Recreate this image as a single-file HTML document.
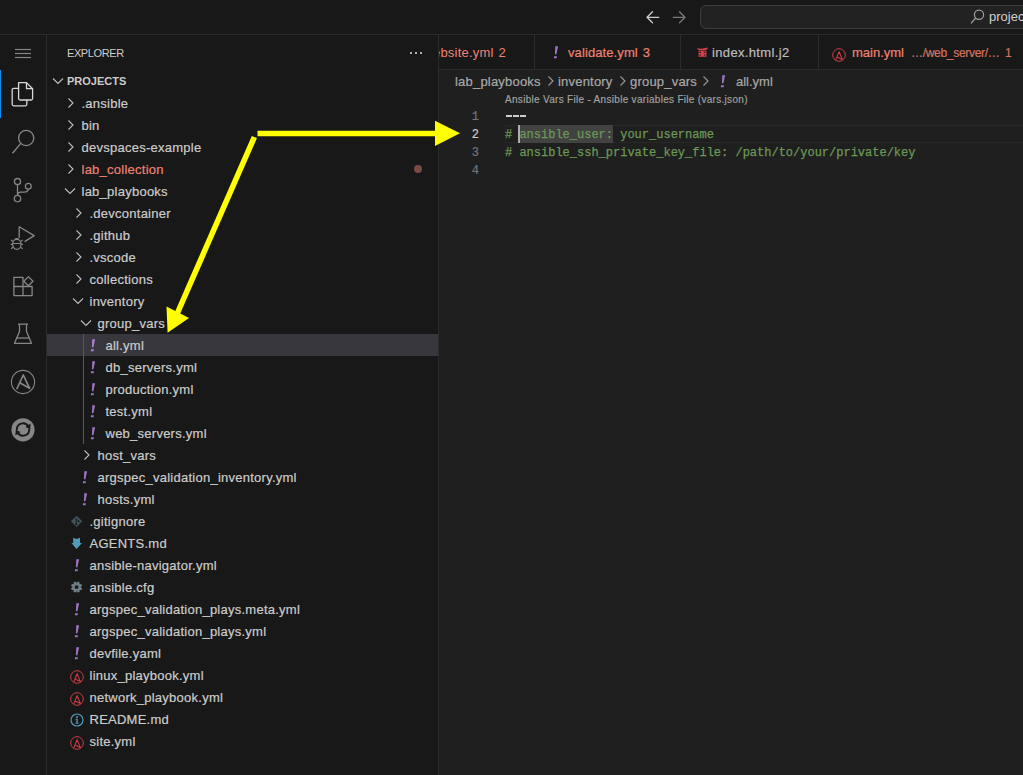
<!DOCTYPE html><html><head><meta charset="utf-8"><style>

*{box-sizing:border-box;margin:0;padding:0}
html,body{width:1023px;height:775px;overflow:hidden;background:#181818;font-family:"Liberation Sans",sans-serif;color:#cccccc;-webkit-font-smoothing:antialiased}
.row .t,.tab,.st{-webkit-text-stroke:0.2px currentColor}
.abs{position:absolute}
.row{position:absolute;left:47px;width:391px;height:22px;line-height:22px;font-size:13px;white-space:nowrap;letter-spacing:0.25px;color:#cccccc}
.row .t{position:absolute;top:1px;margin-left:0.5px}
.row svg{position:absolute}
.yml{position:absolute;top:0;color:#a074c4;font-weight:bold;font-style:italic;font-size:14px;letter-spacing:0}
.code{-webkit-text-stroke:0.25px currentColor;position:absolute;font-family:"Liberation Mono",monospace;font-size:12px;line-height:18px;white-space:pre;color:#6a9955}
.ln{-webkit-text-stroke:0.2px currentColor;position:absolute;font-family:"Liberation Mono",monospace;font-size:12px;line-height:18px;color:#6e7681;text-align:right}
.tab{position:absolute;top:36px;height:34px;line-height:34px;font-size:13px;white-space:nowrap;color:#ee8272}

</style></head><body>
<div class="abs" style="left:0;top:0;width:1023px;height:34px;background:#181818"></div>
<div class="abs" style="left:0;top:34px;width:1023px;height:1px;background:#2b2b2b"></div>
<div class="abs" style="left:46px;top:35px;width:1px;height:740px;background:#2b2b2b"></div>
<div class="abs" style="left:438px;top:35px;width:1px;height:740px;background:#2b2b2b"></div>
<div class="abs" style="left:439px;top:70px;width:584px;height:705px;background:#1f1f1f"></div>
<div class="abs" style="left:439px;top:69px;width:584px;height:1px;background:#2b2b2b"></div>
<div class="abs" style="left:67px;top:45px;font-size:11px;line-height:16px;letter-spacing:-0.4px;color:#cccccc">EXPLORER</div>
<div class="abs" style="left:410px;top:51.5px;width:2px;height:2px;background:#b0b0b0"></div><div class="abs" style="left:415px;top:51.5px;width:2px;height:2px;background:#b0b0b0"></div><div class="abs" style="left:420px;top:51.5px;width:2px;height:2px;background:#b0b0b0"></div>
<svg class="abs" style="left:52px;top:77px" width="12" height="8" viewBox="0 0 12 8"><path d="M1 1.5 L6 6.5 L11 1.5" fill="none" stroke="#bdbdbd" stroke-width="1.1"/></svg>
<div class="abs" style="left:67px;top:73px;font-size:11px;line-height:16px;font-weight:bold;color:#cccccc">PROJECTS</div>
<div class="row" style="top:92px"><svg class="abs" style="left:20px;top:5px" width="8" height="12" viewBox="0 0 8 12"><path d="M1.5 1.5 L6 6 L1.5 10.5" fill="none" stroke="#bdbdbd" stroke-width="1.1"/></svg><span class="t" style="left:34px;color:#cccccc">.ansible</span></div>
<div class="row" style="top:114px"><svg class="abs" style="left:20px;top:5px" width="8" height="12" viewBox="0 0 8 12"><path d="M1.5 1.5 L6 6 L1.5 10.5" fill="none" stroke="#bdbdbd" stroke-width="1.1"/></svg><span class="t" style="left:34px;color:#cccccc">bin</span></div>
<div class="row" style="top:136px"><svg class="abs" style="left:20px;top:5px" width="8" height="12" viewBox="0 0 8 12"><path d="M1.5 1.5 L6 6 L1.5 10.5" fill="none" stroke="#bdbdbd" stroke-width="1.1"/></svg><span class="t" style="left:34px;color:#cccccc">devspaces-example</span></div>
<div class="row" style="top:158px"><svg class="abs" style="left:20px;top:5px" width="8" height="12" viewBox="0 0 8 12"><path d="M1.5 1.5 L6 6 L1.5 10.5" fill="none" stroke="#bdbdbd" stroke-width="1.1"/></svg><span class="t" style="left:34px;color:#ee8272">lab_collection</span><div class="abs" style="left:367px;top:7px;width:8px;height:8px;border-radius:4px;background:#7a4a43"></div></div>
<div class="row" style="top:180px"><svg class="abs" style="left:17px;top:7px" width="12" height="8" viewBox="0 0 12 8"><path d="M1 1.5 L6 6.5 L11 1.5" fill="none" stroke="#bdbdbd" stroke-width="1.1"/></svg><span class="t" style="left:34px;color:#cccccc">lab_playbooks</span></div>
<div class="row" style="top:202px"><svg class="abs" style="left:28px;top:5px" width="8" height="12" viewBox="0 0 8 12"><path d="M1.5 1.5 L6 6 L1.5 10.5" fill="none" stroke="#bdbdbd" stroke-width="1.1"/></svg><span class="t" style="left:42px;color:#cccccc">.devcontainer</span></div>
<div class="row" style="top:224px"><svg class="abs" style="left:28px;top:5px" width="8" height="12" viewBox="0 0 8 12"><path d="M1.5 1.5 L6 6 L1.5 10.5" fill="none" stroke="#bdbdbd" stroke-width="1.1"/></svg><span class="t" style="left:42px;color:#cccccc">.github</span></div>
<div class="row" style="top:246px"><svg class="abs" style="left:28px;top:5px" width="8" height="12" viewBox="0 0 8 12"><path d="M1.5 1.5 L6 6 L1.5 10.5" fill="none" stroke="#bdbdbd" stroke-width="1.1"/></svg><span class="t" style="left:42px;color:#cccccc">.vscode</span></div>
<div class="row" style="top:268px"><svg class="abs" style="left:28px;top:5px" width="8" height="12" viewBox="0 0 8 12"><path d="M1.5 1.5 L6 6 L1.5 10.5" fill="none" stroke="#bdbdbd" stroke-width="1.1"/></svg><span class="t" style="left:42px;color:#cccccc">collections</span></div>
<div class="row" style="top:290px"><svg class="abs" style="left:25px;top:7px" width="12" height="8" viewBox="0 0 12 8"><path d="M1 1.5 L6 6.5 L11 1.5" fill="none" stroke="#bdbdbd" stroke-width="1.1"/></svg><span class="t" style="left:42px;color:#cccccc">inventory</span></div>
<div class="row" style="top:312px"><svg class="abs" style="left:33px;top:7px" width="12" height="8" viewBox="0 0 12 8"><path d="M1 1.5 L6 6.5 L11 1.5" fill="none" stroke="#bdbdbd" stroke-width="1.1"/></svg><span class="t" style="left:50px;color:#cccccc">group_vars</span></div>
<div class="row" style="top:334px"><div class="abs" style="left:0;top:0;width:391px;height:22px;background:#37373d"></div><svg class="abs" style="left:43px;top:0px" width="7" height="22" viewBox="0 0 7 22"><path d="M2.3 5.2 H5.1 L3.4 13.2 H1.9 Z M1.1 15.2 H3.9 L3.6 17.2 H0.8 Z" fill="#b07fd6"/></svg><span class="t" style="left:58px;color:#cccccc">all.yml</span></div>
<div class="row" style="top:356px"><svg class="abs" style="left:43px;top:0px" width="7" height="22" viewBox="0 0 7 22"><path d="M2.3 5.2 H5.1 L3.4 13.2 H1.9 Z M1.1 15.2 H3.9 L3.6 17.2 H0.8 Z" fill="#a074c4"/></svg><span class="t" style="left:58px;color:#cccccc">db_servers.yml</span></div>
<div class="row" style="top:378px"><svg class="abs" style="left:43px;top:0px" width="7" height="22" viewBox="0 0 7 22"><path d="M2.3 5.2 H5.1 L3.4 13.2 H1.9 Z M1.1 15.2 H3.9 L3.6 17.2 H0.8 Z" fill="#a074c4"/></svg><span class="t" style="left:58px;color:#cccccc">production.yml</span></div>
<div class="row" style="top:400px"><svg class="abs" style="left:43px;top:0px" width="7" height="22" viewBox="0 0 7 22"><path d="M2.3 5.2 H5.1 L3.4 13.2 H1.9 Z M1.1 15.2 H3.9 L3.6 17.2 H0.8 Z" fill="#a074c4"/></svg><span class="t" style="left:58px;color:#cccccc">test.yml</span></div>
<div class="row" style="top:422px"><svg class="abs" style="left:43px;top:0px" width="7" height="22" viewBox="0 0 7 22"><path d="M2.3 5.2 H5.1 L3.4 13.2 H1.9 Z M1.1 15.2 H3.9 L3.6 17.2 H0.8 Z" fill="#a074c4"/></svg><span class="t" style="left:58px;color:#cccccc">web_servers.yml</span></div>
<div class="row" style="top:444px"><svg class="abs" style="left:36px;top:5px" width="8" height="12" viewBox="0 0 8 12"><path d="M1.5 1.5 L6 6 L1.5 10.5" fill="none" stroke="#bdbdbd" stroke-width="1.1"/></svg><span class="t" style="left:50px;color:#cccccc">host_vars</span></div>
<div class="row" style="top:466px"><svg class="abs" style="left:35px;top:0px" width="7" height="22" viewBox="0 0 7 22"><path d="M2.3 5.2 H5.1 L3.4 13.2 H1.9 Z M1.1 15.2 H3.9 L3.6 17.2 H0.8 Z" fill="#a074c4"/></svg><span class="t" style="left:50px;color:#cccccc">argspec_validation_inventory.yml</span></div>
<div class="row" style="top:488px"><svg class="abs" style="left:35px;top:0px" width="7" height="22" viewBox="0 0 7 22"><path d="M2.3 5.2 H5.1 L3.4 13.2 H1.9 Z M1.1 15.2 H3.9 L3.6 17.2 H0.8 Z" fill="#a074c4"/></svg><span class="t" style="left:50px;color:#cccccc">hosts.yml</span></div>
<div class="row" style="top:510px"><svg class="abs" style="left:0;top:0" width="60" height="22" viewBox="0 0 60 22"><path d="M23.9 11.3 L29.6 5.7 L35.2 11.3 L29.6 17 Z" fill="#41535b"/><g stroke="#181818" stroke-width="0.9" fill="none"><path d="M29.2 8 V14.6 M29.3 8.8 L31.6 11.2"/></g><circle cx="29.2" cy="14.3" r="1" fill="#181818"/><circle cx="31.7" cy="11.4" r="0.9" fill="#181818"/></svg><span class="t" style="left:42px;color:#cccccc">.gitignore</span></div>
<div class="row" style="top:532px"><svg class="abs" style="left:0;top:0" width="60" height="22" viewBox="0 0 60 22"><path d="M26.2 5.8 L29.6 6.9 L33 5.8 V11 H35 L29.6 16.9 L24.4 11 H26.2 Z" fill="#519aba"/></svg><span class="t" style="left:42px;color:#cccccc">AGENTS.md</span></div>
<div class="row" style="top:554px"><svg class="abs" style="left:27px;top:0px" width="7" height="22" viewBox="0 0 7 22"><path d="M2.3 5.2 H5.1 L3.4 13.2 H1.9 Z M1.1 15.2 H3.9 L3.6 17.2 H0.8 Z" fill="#a074c4"/></svg><span class="t" style="left:42px;color:#cccccc">ansible-navigator.yml</span></div>
<div class="row" style="top:576px"><svg class="abs" style="left:0;top:0" width="60" height="22" viewBox="0 0 60 22"><g fill="#6d8086"><circle cx="29.6" cy="11.1" r="4.3"/><rect x="28.4" y="5.5" width="2.4" height="3" rx="0.4" transform="rotate(22.5 29.6 11.1)"/><rect x="28.4" y="5.5" width="2.4" height="3" rx="0.4" transform="rotate(67.5 29.6 11.1)"/><rect x="28.4" y="5.5" width="2.4" height="3" rx="0.4" transform="rotate(112.5 29.6 11.1)"/><rect x="28.4" y="5.5" width="2.4" height="3" rx="0.4" transform="rotate(157.5 29.6 11.1)"/><rect x="28.4" y="5.5" width="2.4" height="3" rx="0.4" transform="rotate(202.5 29.6 11.1)"/><rect x="28.4" y="5.5" width="2.4" height="3" rx="0.4" transform="rotate(247.5 29.6 11.1)"/><rect x="28.4" y="5.5" width="2.4" height="3" rx="0.4" transform="rotate(292.5 29.6 11.1)"/><rect x="28.4" y="5.5" width="2.4" height="3" rx="0.4" transform="rotate(337.5 29.6 11.1)"/></g><circle cx="29.6" cy="11.1" r="1.9" fill="#181818"/></svg><span class="t" style="left:42px;color:#cccccc">ansible.cfg</span></div>
<div class="row" style="top:598px"><svg class="abs" style="left:27px;top:0px" width="7" height="22" viewBox="0 0 7 22"><path d="M2.3 5.2 H5.1 L3.4 13.2 H1.9 Z M1.1 15.2 H3.9 L3.6 17.2 H0.8 Z" fill="#a074c4"/></svg><span class="t" style="left:42px;color:#cccccc">argspec_validation_plays.meta.yml</span></div>
<div class="row" style="top:620px"><svg class="abs" style="left:27px;top:0px" width="7" height="22" viewBox="0 0 7 22"><path d="M2.3 5.2 H5.1 L3.4 13.2 H1.9 Z M1.1 15.2 H3.9 L3.6 17.2 H0.8 Z" fill="#a074c4"/></svg><span class="t" style="left:42px;color:#cccccc">argspec_validation_plays.yml</span></div>
<div class="row" style="top:642px"><svg class="abs" style="left:27px;top:0px" width="7" height="22" viewBox="0 0 7 22"><path d="M2.3 5.2 H5.1 L3.4 13.2 H1.9 Z M1.1 15.2 H3.9 L3.6 17.2 H0.8 Z" fill="#a074c4"/></svg><span class="t" style="left:42px;color:#cccccc">devfile.yaml</span></div>
<div class="row" style="top:664px"><svg class="abs" style="left:21.8px;top:5px" width="16" height="16" viewBox="0 0 16 16"><circle cx="8" cy="8" r="6.3" fill="none" stroke="#cc3e44" stroke-width="1.0"/><path d="M4.9 12.6 L8.1 4.6 L11.4 12.6 L6.1 9.9" fill="none" stroke="#cc3e44" stroke-width="1.1" stroke-linejoin="round" stroke-linecap="round"/></svg><span class="t" style="left:42px;color:#cccccc">linux_playbook.yml</span></div>
<div class="row" style="top:686px"><svg class="abs" style="left:21.8px;top:5px" width="16" height="16" viewBox="0 0 16 16"><circle cx="8" cy="8" r="6.3" fill="none" stroke="#cc3e44" stroke-width="1.0"/><path d="M4.9 12.6 L8.1 4.6 L11.4 12.6 L6.1 9.9" fill="none" stroke="#cc3e44" stroke-width="1.1" stroke-linejoin="round" stroke-linecap="round"/></svg><span class="t" style="left:42px;color:#cccccc">network_playbook.yml</span></div>
<div class="row" style="top:708px"><svg class="abs" style="left:23px;top:4.5px" width="14" height="14" viewBox="0 0 14 14"><circle cx="7" cy="7" r="6" fill="none" stroke="#519aba" stroke-width="1.2"/><path d="M5.6 5.8 H7.7 V9.8 H8.6 V10.8 H5.5 V9.8 H6.4 V6.8 H5.6 Z" fill="#519aba"/><circle cx="7" cy="3.9" r="1" fill="#519aba"/></svg><span class="t" style="left:42px;color:#cccccc">README.md</span></div>
<div class="row" style="top:730px"><svg class="abs" style="left:21.8px;top:5px" width="16" height="16" viewBox="0 0 16 16"><circle cx="8" cy="8" r="6.3" fill="none" stroke="#cc3e44" stroke-width="1.0"/><path d="M4.9 12.6 L8.1 4.6 L11.4 12.6 L6.1 9.9" fill="none" stroke="#cc3e44" stroke-width="1.1" stroke-linejoin="round" stroke-linecap="round"/></svg><span class="t" style="left:42px;color:#cccccc">site.yml</span></div>
<div class="abs" style="left:83px;top:334px;width:1px;height:110px;background:#585858"></div>
<svg class="abs" style="left:0;top:35px" width="46" height="740" viewBox="0 35 46 740">
<g stroke="#868686" stroke-width="1.2" fill="none">
<path d="M15 49.5 H31"/>
<path d="M15 53.5 H31"/>
<path d="M15 57.5 H31"/>
</g>
<rect x="0" y="70" width="1" height="48" fill="#0a8ef5"/>
<g fill="none" stroke="#d7d7d7" stroke-width="1.3" stroke-linejoin="round"><path d="M18.6 82.6 H26.5 L32.6 88.7 V98.5 Q32.6 100 31.1 100 H20.1 Q18.6 100 18.6 98.5 Z"/><path d="M26.5 82.6 V88.7 H32.6"/><path d="M18.6 88.3 H13.7 Q12.2 88.3 12.2 89.8 V104.3 Q12.2 105.8 13.7 105.8 H25.3 Q26.8 105.8 26.8 104.3 V100"/></g>
<g fill="none" stroke="#868686" stroke-width="1.4"><circle cx="26.2" cy="138" r="7.6"/><path d="M20.8 143.4 L12.5 153.2"/></g>
<g fill="none" stroke="#868686" stroke-width="1.3"><circle cx="17.5" cy="181.6" r="3.1"/><circle cx="17.5" cy="198.6" r="3.2"/><circle cx="28.3" cy="186.2" r="2.9"/><path d="M17.5 184.7 V195.4"/><path d="M28.3 189.1 Q28.3 192 24 192.2 H21 Q17.5 192.4 17.5 195.4"/></g>
<g fill="none" stroke="#868686" stroke-width="1.3" stroke-linejoin="round"><path d="M19.2 238 V226.8 L34.2 235.6 L24.6 241.6"/></g>
<g fill="none" stroke="#868686" stroke-width="1.2"><ellipse cx="16.8" cy="244.3" rx="4.2" ry="5"/><path d="M12.6 243.5 H21 M11 240 L13 241.5 M22.6 240 L20.6 241.5 M11 248.8 L13 247.3 M22.6 248.8 L20.6 247.3 M10.6 244.3 H12.6 M21 244.3 H23"/><path d="M14.5 239.6 Q16.8 237.5 19.1 239.6"/></g>
<g fill="none" stroke="#868686" stroke-width="1.3" stroke-linejoin="round"><path d="M13.9 277.4 H23 V286.5 H32.1 V295.6 H13.9 Z"/><path d="M13.9 286.5 H23 V295.6"/><path d="M28.4 276.6 L33 281.2 L28.4 285.8 L23.8 281.2 Z"/></g>
<g fill="none" stroke="#868686" stroke-width="1.3" stroke-linejoin="round"><path d="M18 324.2 H28 M19.5 324.2 V331.5 L14.5 343.3 H31.5 L26.5 331.5 V324.2"/><path d="M16.5 338 H29.5"/></g>
<g fill="none" stroke="#868686" stroke-width="1.1"><circle cx="23" cy="382" r="11.6"/></g><g fill="none" stroke="#868686" stroke-width="1.7" stroke-linejoin="round" stroke-linecap="round"><path d="M17 388.5 L23.3 375 L29.6 388.3 L20.6 383.3"/></g>
<circle cx="23" cy="429.8" r="11.6" fill="#868686"/>
<g fill="none" stroke="#181818" stroke-width="1.9"><path d="M16.8 430 A6.2 6.2 0 0 1 28.3 426.4"/><path d="M29.2 428.9 A6.2 6.2 0 0 1 17.6 432.5"/></g>
<g fill="#181818"><path d="M30.6 423.4 L30.2 429.2 L25.4 426.9 Z"/><path d="M15.4 435.6 L15.8 429.8 L20.6 432.1 Z"/></g>
</svg>
<svg class="abs" style="left:640px;top:8px" width="50" height="20" viewBox="640 8 50 20"><g fill="none" stroke-width="1.3" stroke-linecap="round" stroke-linejoin="round"><path d="M658.8 17.3 H647 M652.5 11.8 L647 17.3 L652.5 22.8" stroke="#cccccc"/><path d="M673.2 17.3 H685 M679.5 11.8 L685 17.3 L679.5 22.8" stroke="#7a7a7a"/></g></svg>
<div class="abs" style="left:700px;top:5px;width:340px;height:24px;border:1px solid #3c3c3c;border-radius:6px;background:#222222"></div>
<svg class="abs" style="left:968px;top:8px" width="18" height="18" viewBox="968 8 18 18"><g fill="none" stroke="#a0a0a0" stroke-width="1.2"><circle cx="979" cy="14.7" r="4.6"/><path d="M975.7 18 L971 23.3"/></g></svg>
<div class="abs" style="left:989px;top:9px;font-size:13px;line-height:16px;color:#d0d0d0;white-space:nowrap">projects</div>
<div class="abs" style="left:534px;top:35px;width:1px;height:34px;background:#2b2b2b"></div>
<div class="abs" style="left:680px;top:35px;width:1px;height:34px;background:#2b2b2b"></div>
<div class="abs" style="left:818px;top:35px;width:1px;height:34px;background:#2b2b2b"></div>
<div class="abs" style="left:439px;top:35px;width:95px;height:34px;overflow:hidden"><span class="abs" style="left:-6px;top:0.5px;line-height:34px;font-size:13px;letter-spacing:0.2px;color:#ee8272;white-space:nowrap">ebsite.yml<span style="margin-left:5px">2</span></span></div>
<svg class="abs" style="left:553px;top:41px" width="7" height="22" viewBox="0 0 7 22"><path d="M2.3 5.2 H5.1 L3.4 13.2 H1.9 Z M1.1 15.2 H3.9 L3.6 17.2 H0.8 Z" fill="#a074c4"/></svg>
<span class="tab" style="left:568px;letter-spacing:0.1px">validate.yml<span style="margin-left:5px">3</span></span>
<svg class="abs" style="left:697px;top:47px" width="11" height="11" viewBox="0 0 11 11"><g fill="#d83f4b"><path d="M0.3 1.2 Q5 2.4 10.6 0.6 L10.4 2.6 Q5 3.6 0.6 2.8 Z"/><rect x="1.6" y="3.6" width="7.8" height="6.2"/></g><g fill="#1a1a1a"><rect x="2.4" y="4.6" width="1.6" height="1.2"/><rect x="6.8" y="4.6" width="1.6" height="1.2"/><rect x="2.4" y="7.6" width="1.4" height="1"/><rect x="6.9" y="7.6" width="1.4" height="1"/></g></svg>
<span class="tab" style="left:712px;color:#bcbcbc;letter-spacing:0.35px">index.html.j2</span>
<svg class="abs" style="left:830.7px;top:46.7px" width="16" height="16" viewBox="0 0 16 16"><circle cx="8" cy="8" r="6.3" fill="none" stroke="#cc3e44" stroke-width="1.0"/><path d="M4.9 12.6 L8.1 4.6 L11.4 12.6 L6.1 9.9" fill="none" stroke="#cc3e44" stroke-width="1.1" stroke-linejoin="round" stroke-linecap="round"/></svg>
<span class="tab" style="left:852px">main.yml</span>
<span class="tab" style="left:911px;font-size:12px;letter-spacing:-0.3px;color:#d4735f">…/web_server/…</span>
<span class="tab" style="left:1005px;font-size:12px;color:#d4735f">1</span>
<div class="abs" style="left:455px;top:73px;font-size:13px;line-height:18px;-webkit-text-stroke:0.2px currentColor;letter-spacing:0.2px;color:#a9a9a9;white-space:nowrap">lab_playbooks</div>
<svg class="abs" style="left:546.5px;top:75px" width="8" height="12" viewBox="0 0 8 12"><path d="M1.5 1.5 L6 6 L1.5 10.5" fill="none" stroke="#9a9a9a" stroke-width="1.1"/></svg>
<div class="abs" style="left:558px;top:73px;font-size:13px;line-height:18px;-webkit-text-stroke:0.2px currentColor;letter-spacing:0.2px;color:#a9a9a9;white-space:nowrap">inventory</div>
<svg class="abs" style="left:619px;top:75px" width="8" height="12" viewBox="0 0 8 12"><path d="M1.5 1.5 L6 6 L1.5 10.5" fill="none" stroke="#9a9a9a" stroke-width="1.1"/></svg>
<div class="abs" style="left:630px;top:73px;font-size:13px;line-height:18px;-webkit-text-stroke:0.2px currentColor;letter-spacing:0.2px;color:#a9a9a9;white-space:nowrap">group_vars</div>
<svg class="abs" style="left:702px;top:75px" width="8" height="12" viewBox="0 0 8 12"><path d="M1.5 1.5 L6 6 L1.5 10.5" fill="none" stroke="#9a9a9a" stroke-width="1.1"/></svg>
<svg class="abs" style="left:720px;top:70px" width="7" height="22" viewBox="0 0 7 22"><path d="M2.3 5.2 H5.1 L3.4 13.2 H1.9 Z M1.1 15.2 H3.9 L3.6 17.2 H0.8 Z" fill="#a074c4"/></svg>
<div class="abs" style="left:736px;top:73px;font-size:13px;line-height:18px;-webkit-text-stroke:0.2px currentColor;color:#a9a9a9;white-space:nowrap">all.yml</div>
<div class="abs" style="-webkit-text-stroke:0.15px currentColor;left:505px;top:93px;font-size:10px;line-height:14px;letter-spacing:0.3px;color:#a4a4a4;white-space:nowrap">Ansible Vars File - Ansible variables File (vars.json)</div>
<div class="abs" style="left:505px;top:125px;width:518px;height:18px;border:1px solid #282828;border-right:none"></div>
<div class="abs" style="left:519px;top:125px;width:94px;height:18px;background:#424242"></div>
<div class="ln" style="left:439px;width:40px;top:108px;color:#6e7681">1</div>
<div class="ln" style="left:439px;width:40px;top:126px;color:#cccccc">2</div>
<div class="ln" style="left:439px;width:40px;top:144px;color:#6e7681">3</div>
<div class="ln" style="left:439px;width:40px;top:162px;color:#6e7681">4</div>
<div class="abs" style="left:505.5px;top:115px;width:6px;height:2px;background:#cccccc"></div><div class="abs" style="left:512.7px;top:115px;width:6px;height:2px;background:#cccccc"></div><div class="abs" style="left:519.9px;top:115px;width:6.5px;height:2px;background:#cccccc"></div>
<div class="code" style="left:505px;top:126px"># ansible_user: your_username</div>
<div class="code" style="left:505px;top:144px"># ansible_ssh_private_key_file: /path/to/your/private/key</div>
<div class="abs" style="left:518px;top:125px;width:2px;height:18px;background:#aeafad"></div>
<svg class="abs" style="left:0;top:0" width="1023" height="775" viewBox="0 0 1023 775"><path d="M257.5 133.5 H437" stroke="#ffff00" stroke-width="5.6" fill="none"/><path d="M435 120.8 L460 133.3 L435 146 Z" fill="#ffff00"/><path d="M254.4 137 L177 314" stroke="#ffff00" stroke-width="5.6" fill="none"/><path d="M166.5 306.6 L189 318 L167.6 332.7 Z" fill="#ffff00"/></svg>
</body></html>
